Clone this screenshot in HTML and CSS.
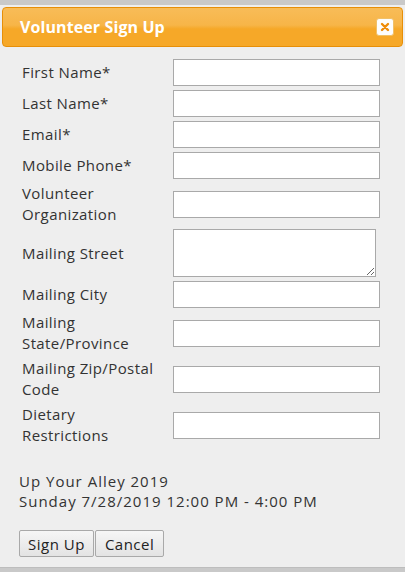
FILE: index.html
```html
<!DOCTYPE html>
<html>
<head>
<meta charset="utf-8">
<link rel="stylesheet" href="styles.css">
</head>
<body>
<div class="dialog">
  <div class="titlebar">
    <span class="title">Volunteer Sign Up</span>
    <button class="close" aria-label="close">
      <svg width="10" height="10" viewBox="0 0 10 10"><path d="M2 2L8 8M8 2L2 8" stroke="#ef8c08" stroke-width="2.4" stroke-linecap="round"/></svg>
    </button>
  </div>
  <div class="content">
    <div class="form">
      <label>First Name*</label><input type="text">
      <label>Last Name*</label><input type="text">
      <label>Email*</label><input type="text">
      <label>Mobile Phone*</label><input type="text">
      <label>Volunteer Organization</label><input type="text">
      <label>Mailing Street</label><textarea></textarea>
      <label>Mailing City</label><input type="text">
      <label>Mailing State/Province</label><input type="text">
      <label>Mailing Zip/Postal Code</label><input type="text">
      <label>Dietary Restrictions</label><input type="text">
    </div>
    <div class="event">
      <div>Up Your Alley 2019</div>
      <div>Sunday 7/28/2019 12:00 PM - 4:00 PM</div>
    </div>
    <div class="buttons">
      <button class="btn">Sign Up</button><button class="btn">Cancel</button>
    </div>
  </div>
</div>
</body>
</html>
```

FILE: styles.css
```css
html, body {
  margin: 0;
  padding: 0;
  background: #c9c9c9;
  height: 572px;
  overflow: hidden;
}
.dialog {
  margin-top: 5px;
  height: 563px;
  background: #eeeeee;
  padding: 2px 2px 0 2px;
  box-sizing: border-box;
  font-family: "Open Sans", sans-serif;
  color: #333;
  border-bottom: 1px solid #bdbdbd;
}
.titlebar {
  height: 40px;
  box-sizing: border-box;
  border: 1px solid #e78f08;
  border-radius: 4px;
  background: linear-gradient(to bottom, #f8bc58 0%, #f7b548 45%, #f6a828 55%, #f6a828 100%);
  display: flex;
  align-items: center;
  justify-content: space-between;
  padding: 0 8px 0 17px;
}
.title {
  color: #fff;
  font-weight: bold;
  font-size: 16px;
  letter-spacing: 0.1px;
}
.close {
  width: 18px;
  height: 18px;
  padding: 0;
  border: 1px solid #f0c068;
  border-radius: 3px;
  background: #fdfdfd;
  display: flex;
  align-items: center;
  justify-content: center;
}
.content {
  padding: 12px 0 0 17px;
}
.form {
  display: grid;
  grid-template-columns: 154px 207px;
  row-gap: 4px;
  align-items: center;
}
.form label {
  font-size: 15px;
  line-height: 21px;
  letter-spacing: 0.4px;
  padding-left: 3px;
  padding-right: 12px;
  color: #333;
}
.form input {
  width: 207px;
  height: 27px;
  box-sizing: border-box;
  border: 1px solid #a9a9a9;
  background: #fff;
  margin: 0;
}
.form textarea {
  width: 203px;
  height: 48px;
  box-sizing: border-box;
  border: 1px solid #a9a9a9;
  background: #fff;
  margin: 0;
}
.event {
  margin-top: 25px;
  font-size: 15px;
  line-height: 20px;
  letter-spacing: 1px;
  color: #333;
}
.buttons {
  margin-top: 19px;
  display: flex;
}
.btn {
  font-family: "Open Sans", sans-serif;
  font-size: 15px;
  letter-spacing: 0.5px;
  color: #222;
  height: 27px;
  padding: 0 8px 0 8px;
  border: 1px solid #a9a9a9;
  border-radius: 2px;
  background: linear-gradient(to bottom, #f6f6f6, #e3e3e3);
  margin: 0;
}
.btn + .btn {
  margin-left: 1px;
  padding: 0 9px;
}
```
